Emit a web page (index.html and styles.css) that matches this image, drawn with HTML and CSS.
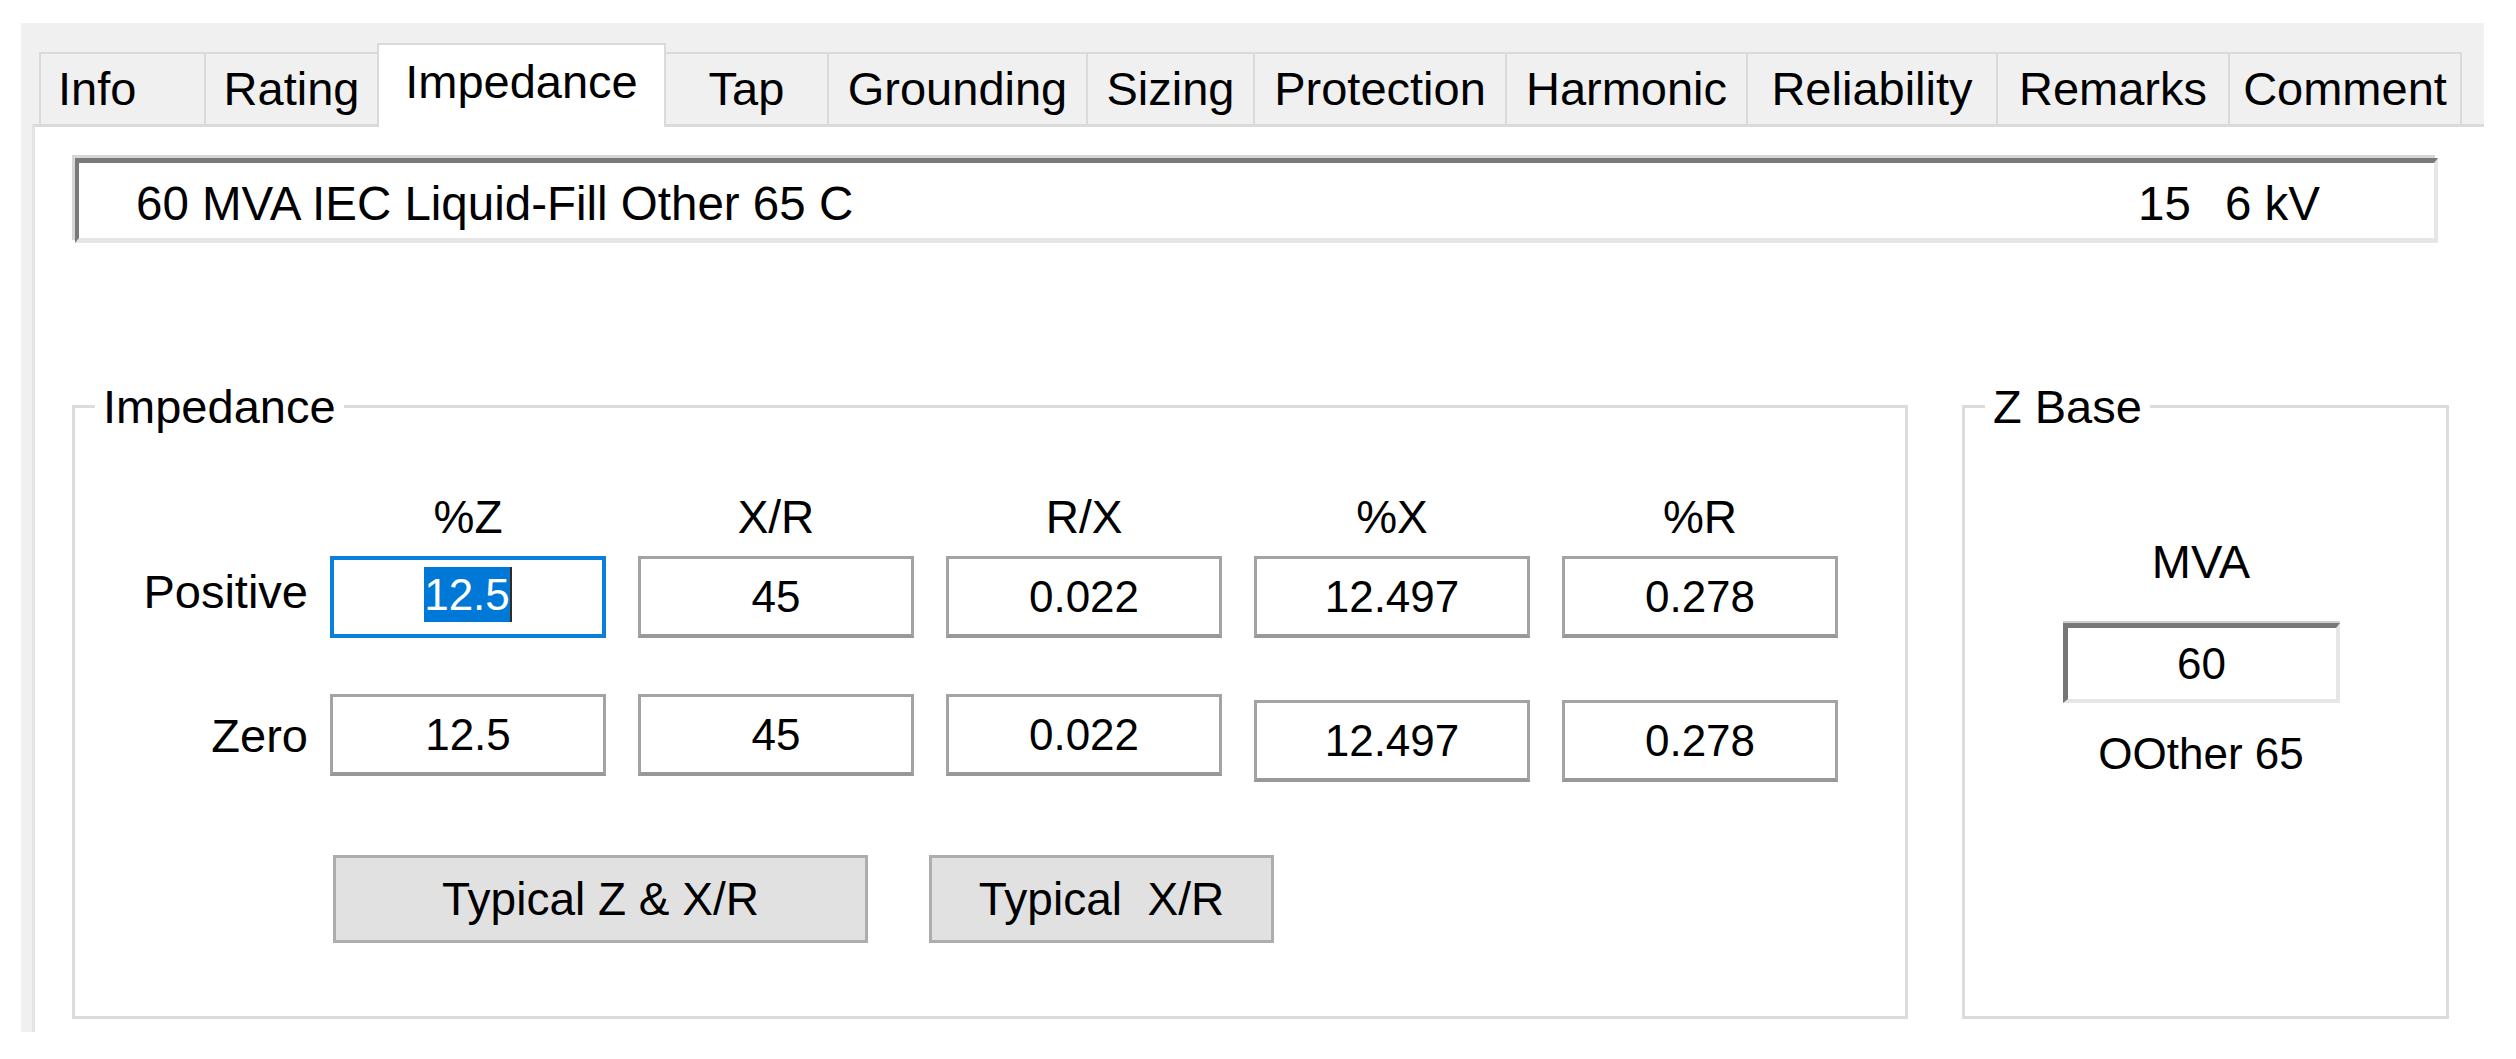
FILE: index.html
```html
<!DOCTYPE html>
<html>
<head>
<meta charset="utf-8">
<title>Impedance</title>
<link rel="stylesheet" href="styles.css">
</head>
<body>
<div class="window">
  <div class="tabs">
    <div class="tab tab-info">Info</div>
    <div class="tab w-rating">Rating</div>
    <div class="tab tab-active w-impedance">Impedance</div>
    <div class="tab w-tap">Tap</div>
    <div class="tab w-grounding">Grounding</div>
    <div class="tab w-sizing">Sizing</div>
    <div class="tab w-protection">Protection</div>
    <div class="tab w-harmonic">Harmonic</div>
    <div class="tab w-reliability">Reliability</div>
    <div class="tab w-remarks">Remarks</div>
    <div class="tab w-comment">Comment</div>
  </div>
  <div class="panel">
    <div class="infobar">
      <span>60 MVA IEC Liquid-Fill Other 65 C</span>
      <span class="info-right"><span>15</span><span>6 kV</span></span>
    </div>
    <div class="groups">
      <fieldset class="group group-imp">
        <legend>Impedance</legend>
        <div class="grid-row hdr">
          <span></span><span>%Z</span><span>X/R</span><span>R/X</span><span>%X</span><span>%R</span>
        </div>
        <div class="grid-row vals">
          <span class="rowlabel rowlabel-pos">Positive</span>
          <div class="field focus"><span class="sel">12.5</span></div>
          <div class="field">45</div>
          <div class="field">0.022</div>
          <div class="field">12.497</div>
          <div class="field">0.278</div>
        </div>
        <div class="grid-row vals vals-zero">
          <span class="rowlabel">Zero</span>
          <div class="field">12.5</div>
          <div class="field">45</div>
          <div class="field">0.022</div>
          <div class="field low">12.497</div>
          <div class="field low">0.278</div>
        </div>
        <div class="buttons">
          <div class="btn btn-wide">Typical Z &amp; X/R</div>
          <div class="btn btn-narrow">Typical&nbsp; X/R</div>
        </div>
      </fieldset>
      <fieldset class="group group-base">
        <legend>Z Base</legend>
        <div class="base-label">MVA</div>
        <div class="base-field">60</div>
        <div class="base-note">OOther 65</div>
      </fieldset>
    </div>
  </div>
</div>
</body>
</html>
```

FILE: styles.css
```css
* { box-sizing: border-box; }
html, body { margin: 0; padding: 0; background: #ffffff; }
body {
  font-family: "Liberation Sans", Arial, sans-serif;
  color: #000;
  width: 2516px;
  height: 1059px;
  overflow: hidden;
}

.window {
  margin: 23px 0 0 21px;
  width: 2463px;
  background: #f0f0f0;
  padding-left: 11px;
}

/* Tab strip */
.tabs {
  display: flex;
  align-items: flex-end;
  height: 101px;
  margin-left: 7px;
}
.tab {
  height: 72px;
  border-top: 2px solid #dadada;
  border-left: 2px solid #dadada;
  font-size: 47px;
  line-height: 70px;
  text-align: center;
  white-space: nowrap;
  background: #f0f0f0;
}
.tab:last-child { border-right: 2px solid #dadada; }
.tab-active {
  height: 84px;
  margin-bottom: -3px;
  padding: 2px 0 10px;
  background: #ffffff;
  border-right: 2px solid #dadada;
  position: relative;
  z-index: 1;
}
.tab-info { width: 165px; text-align: left; padding-left: 17px; }
.w-rating { width: 173px; }
.w-impedance { width: 289px; }
.w-tap { width: 161px; border-left: none; }
.w-grounding { width: 259px; }
.w-sizing { width: 167px; }
.w-protection { width: 252px; }
.w-harmonic { width: 241px; }
.w-reliability { width: 250px; }
.w-remarks { width: 232px; }
.w-comment { width: 234px; }

/* Panel */
.panel {
  height: 908px;
  background: #ffffff;
  border-top: 3px solid #dadada;
  border-left: 3px solid #e3e3e3;
}

.infobar {
  margin: 31px 0 0 40px;
  width: 2363px;
  display: flex;
  justify-content: space-between;
  border-top: 5px solid #7a7a7a;
  border-left: 4px solid #7a7a7a;
  border-right: 4px solid #e6e6e6;
  border-bottom: 5px solid #e6e6e6;
  box-shadow: -3px -3px 0 #d6d6d6;
  padding: 13px 114px 6px 57px;
  font-size: 47.5px;
  line-height: 56px;
  white-space: nowrap;
}
.info-right { display: flex; gap: 34px; }

/* Group boxes */
.groups {
  display: flex;
  align-items: stretch;
  gap: 54px;
  margin: 140px 0 0 37px;
}
.group {
  margin: 0;
  padding: 0;
  min-width: 0;
  border: 3px solid #dcdcdc;
}
.group legend {
  margin-left: 20px;
  padding: 0 8px;
  font-size: 47px;
  line-height: 47px;
}
.group-imp { width: 1836px; padding-bottom: 73px; }
.group-base { width: 487px; padding-right: 9px; }

.grid-row {
  display: grid;
  grid-template-columns: 223px repeat(5, 276px);
  column-gap: 32px;
}
.hdr {
  margin-top: 62px;
  height: 50px;
  font-size: 46px;
  line-height: 50px;
  text-align: center;
}
.vals {
  margin-top: 14px;
  grid-template-rows: 82px;
}
.vals-zero { margin-top: 56px; }

.rowlabel {
  justify-self: end;
  align-self: center;
  margin-right: -10px;
  font-size: 47px;
  line-height: 47px;
}
.rowlabel-pos { padding-bottom: 12px; }

.field {
  height: 82px;
  border: 3px solid #a3a3a3;
  border-bottom: 4px solid #989898;
  display: flex;
  align-items: center;
  justify-content: center;
  font-size: 44px;
  background: #fff;
}
.field.low { margin-top: 6px; }
.field.focus {
  border: 4px solid #0a7fd9;
  padding-bottom: 6px;
}
.sel {
  display: inline-block;
  background: #0078d7;
  color: #ffffff;
  line-height: 55px;
  border-right: 2px solid #3a2a1a;
}

.buttons {
  display: flex;
  gap: 61px;
  margin: 79px 0 0 258px;
}
.btn {
  height: 88px;
  background: #e1e1e1;
  border: 3px solid #adadad;
  display: flex;
  align-items: center;
  justify-content: center;
  font-size: 46px;
  white-space: nowrap;
}
.btn-wide { width: 535px; }
.btn-narrow { width: 345px; }

/* Z Base */
.base-label {
  margin-top: 108px;
  text-align: center;
  font-size: 47px;
  line-height: 47px;
}
.base-field {
  margin: 38px auto 0;
  width: 277px;
  height: 80px;
  border-top: 5px solid #777777;
  border-left: 5px solid #777777;
  border-right: 4px solid #e6e6e6;
  border-bottom: 4px solid #e6e6e6;
  box-shadow: 0 -2px 0 #cfcfcf;
  display: flex;
  align-items: center;
  justify-content: center;
  font-size: 44px;
}
.base-note {
  margin-top: 27px;
  text-align: center;
  font-size: 44px;
  line-height: 47px;
  white-space: nowrap;
}
```
